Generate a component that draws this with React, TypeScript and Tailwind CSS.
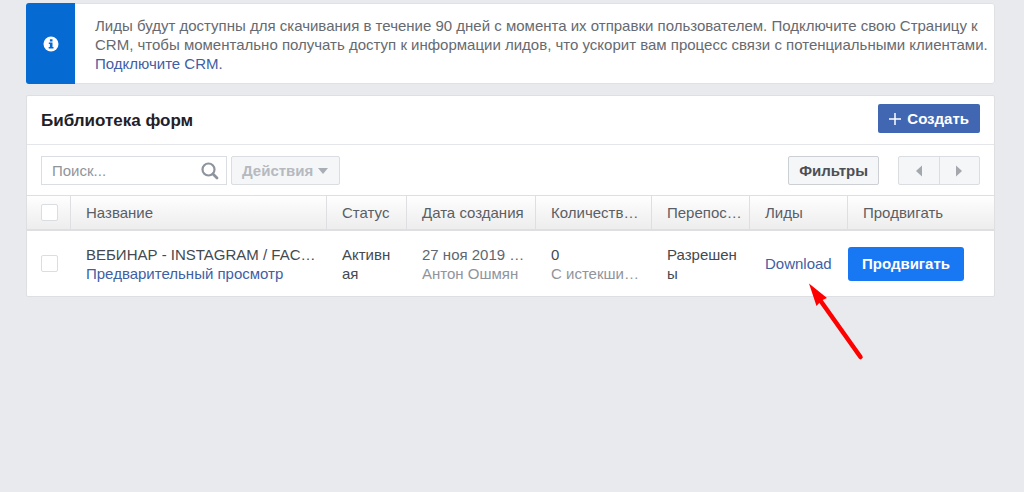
import type { ReactNode } from "react";

const columns = [
  "Название",
  "Статус",
  "Дата создания",
  "Количеств…",
  "Перепос…",
  "Лиды",
  "Продвигать",
];

function Checkbox({ label }: { label: string }) {
  return (
    <input
      type="checkbox"
      aria-label={label}
      className="block size-[17px] appearance-none rounded-[2px] border border-[#dadde1] bg-white checked:bg-[#4267b2]"
    />
  );
}

function Cell({ children }: { children: ReactNode }) {
  return <td className="py-3 pr-3 pl-[15px] align-middle text-[#444950]">{children}</td>;
}

function Notice() {
  return (
    <section className="flex overflow-hidden rounded-[3px] bg-white shadow-[inset_0_0_0_1px_#dfe1e5]">
      <div className="flex w-[49px] shrink-0 items-center justify-center bg-[#056bd3]">
        <svg viewBox="0 0 16 16" className="size-4" aria-hidden="true">
          <circle cx="8" cy="8" r="7.5" fill="#fff" />
          <path d="M6.9 3.2h2.6v2.2H6.900zM5.800 6.400h3.700v4.500h1v1.700H5.700v-1.700H6.900V8.100H5.800z" fill="#056bd3" />
        </svg>
      </div>
      <p className="pt-[13px] pr-1 pb-[11px] pl-5 text-[#666a70]">
        Лиды будут доступны для скачивания в течение 90 дней с момента их отправки пользователем.
        Подключите свою Страницу к CRM, чтобы моментально получать доступ к информации лидов, что
        ускорит вам процесс связи с потенциальными клиентами.{" "}
        <a href="#crm" className="text-[#4060a5]">
          Подключите CRM.
        </a>
      </p>
    </section>
  );
}

function Toolbar() {
  return (
    <div className="flex items-center px-[14px] pt-[11px] pb-[10px]">
      <label className="flex h-[29px] w-[186px] items-center border border-[#dadde1] bg-white pr-[7px] pl-[10px]">
        <input
          type="text"
          aria-label="Поиск"
          placeholder="Поиск..."
          className="w-full min-w-0 bg-transparent outline-none placeholder:text-[#90949c]"
        />
        <svg viewBox="0 0 18 18" className="size-[18px] shrink-0" fill="none" stroke="#8d949e" aria-hidden="true">
          <circle cx="7.5" cy="7.5" r="6" strokeWidth="2.2" />
          <path d="M12 12l4 4" strokeWidth="2.8" strokeLinecap="round" />
        </svg>
      </label>
      <button
        type="button"
        disabled
        className="ml-1 flex h-[29px] items-center gap-1 rounded-[2px] border border-[#dadde1] bg-[#f5f6f7] px-[10px] font-bold text-[#b5b9c0]"
      >
        Действия
        <svg viewBox="0 0 12 8" className="h-2 w-3" fill="#a9adb5" aria-hidden="true">
          <path d="M1 1h10L6 7z" />
        </svg>
      </button>
      <button
        type="button"
        className="ml-auto h-[29px] rounded-[2px] border border-[#ccd0d5] bg-[#f5f6f7] px-[10px] font-bold text-[#4b4f56]"
      >
        Фильтры
      </button>
      <div className="ml-[19px] flex h-[29px] w-[82px] divide-x divide-[#dadde1] rounded-[2px] border border-[#dadde1] bg-[#f5f6f7]">
        <button type="button" aria-label="Назад" className="flex flex-1 items-center justify-center">
          <svg viewBox="0 0 6 12" className="h-3 w-[6px]" fill="#a4a7ad" aria-hidden="true">
            <path d="M6 .5v11L0 6z" />
          </svg>
        </button>
        <button type="button" aria-label="Вперёд" className="flex flex-1 items-center justify-center">
          <svg viewBox="0 0 6 12" className="h-3 w-[6px]" fill="#a4a7ad" aria-hidden="true">
            <path d="M0 .5v11L6 6z" />
          </svg>
        </button>
      </div>
    </div>
  );
}

function FormsTable() {
  return (
    <table className="w-full table-fixed border-separate border-spacing-0 text-left">
      <colgroup>
        <col className="w-[44px]" />
        <col />
        <col className="w-[80px]" />
        <col className="w-[129px]" />
        <col className="w-[116px]" />
        <col className="w-[98px]" />
        <col className="w-[98px]" />
        <col className="w-[146px]" />
      </colgroup>
      <thead>
        <tr className="h-9 bg-linear-to-b from-white to-[#ececec]">
          <th className="border-t border-r border-b-2 border-[#dddfe2] pl-[14px]">
            <Checkbox label="Выбрать все" />
          </th>
          {columns.map((name) => (
            <th
              key={name}
              className="border-t border-r border-b-2 border-[#dddfe2] pl-[15px] font-normal whitespace-nowrap text-[#5a5e65] last:border-r-0"
            >
              {name}
            </th>
          ))}
        </tr>
      </thead>
      <tbody>
        <tr className="h-[65px]">
          <td className="pl-[14px] align-middle">
            <Checkbox label="Выбрать форму" />
          </td>
          <Cell>
            <div className="whitespace-nowrap">ВЕБИНАР - INSTAGRAM / FAC…</div>
            <a href="#preview" className="block whitespace-nowrap text-[#4060a5]">
              Предварительный просмотр
            </a>
          </Cell>
          <Cell>
            <span className="break-all">Активная</span>
          </Cell>
          <Cell>
            <div className="whitespace-nowrap text-[#606770]">27 ноя 2019 …</div>
            <div className="whitespace-nowrap text-[#90949c]">Антон Ошмян</div>
          </Cell>
          <Cell>
            <div>0</div>
            <div className="whitespace-nowrap text-[#90949c]">С истекши…</div>
          </Cell>
          <Cell>
            <span className="break-all">Разрешены</span>
          </Cell>
          <Cell>
            <div className="relative">
              <a href="#download" className="text-[#4060a5]">
                Download
              </a>
              <svg
                viewBox="0 0 56 78"
                className="pointer-events-none absolute top-[29px] left-[43px] h-[78px] w-14 max-w-none"
                aria-hidden="true"
              >
                <path d="M12 17L52.500 74" stroke="#fe0000" strokeWidth="4.500" strokeLinecap="round" />
                <path d="M1 .5l18 14.500-5.500 2.500-5 5.500z" fill="#fe0000" />
              </svg>
            </div>
          </Cell>
          <td className="align-middle">
            <button type="button" className="h-[34px] rounded-[3px] bg-[#1877f2] px-[14px] font-bold text-white">
              Продвигать
            </button>
          </td>
        </tr>
      </tbody>
    </table>
  );
}

export default function App() {
  return (
    <main className="min-h-screen bg-[#e8eaed] pt-[3px] pr-[29px] pb-6 pl-[26px] font-['Liberation_Sans',Arial,sans-serif] text-[15px] leading-[19px]">
      <Notice />
      <section className="mt-[11px] rounded-[2px] border border-[#dddfe2] bg-white">
        <header className="flex items-center justify-between border-b border-[#e5e6e9] px-[14px] pt-2 pb-[11px]">
          <h1 className="pt-[5px] text-[17px] leading-6 font-bold text-[#1d2129]">Библиотека форм</h1>
          <button
            type="button"
            className="flex h-[29px] items-center gap-[6px] rounded-[2px] bg-[#4267b2] px-[11px] font-bold text-white"
          >
            <svg viewBox="0 0 12 12" className="size-3" stroke="#fff" strokeWidth="1.500" aria-hidden="true">
              <path d="M6 0v12M0 6h12" />
            </svg>
            Создать
          </button>
        </header>
        <Toolbar />
        <FormsTable />
      </section>
    </main>
  );
}
